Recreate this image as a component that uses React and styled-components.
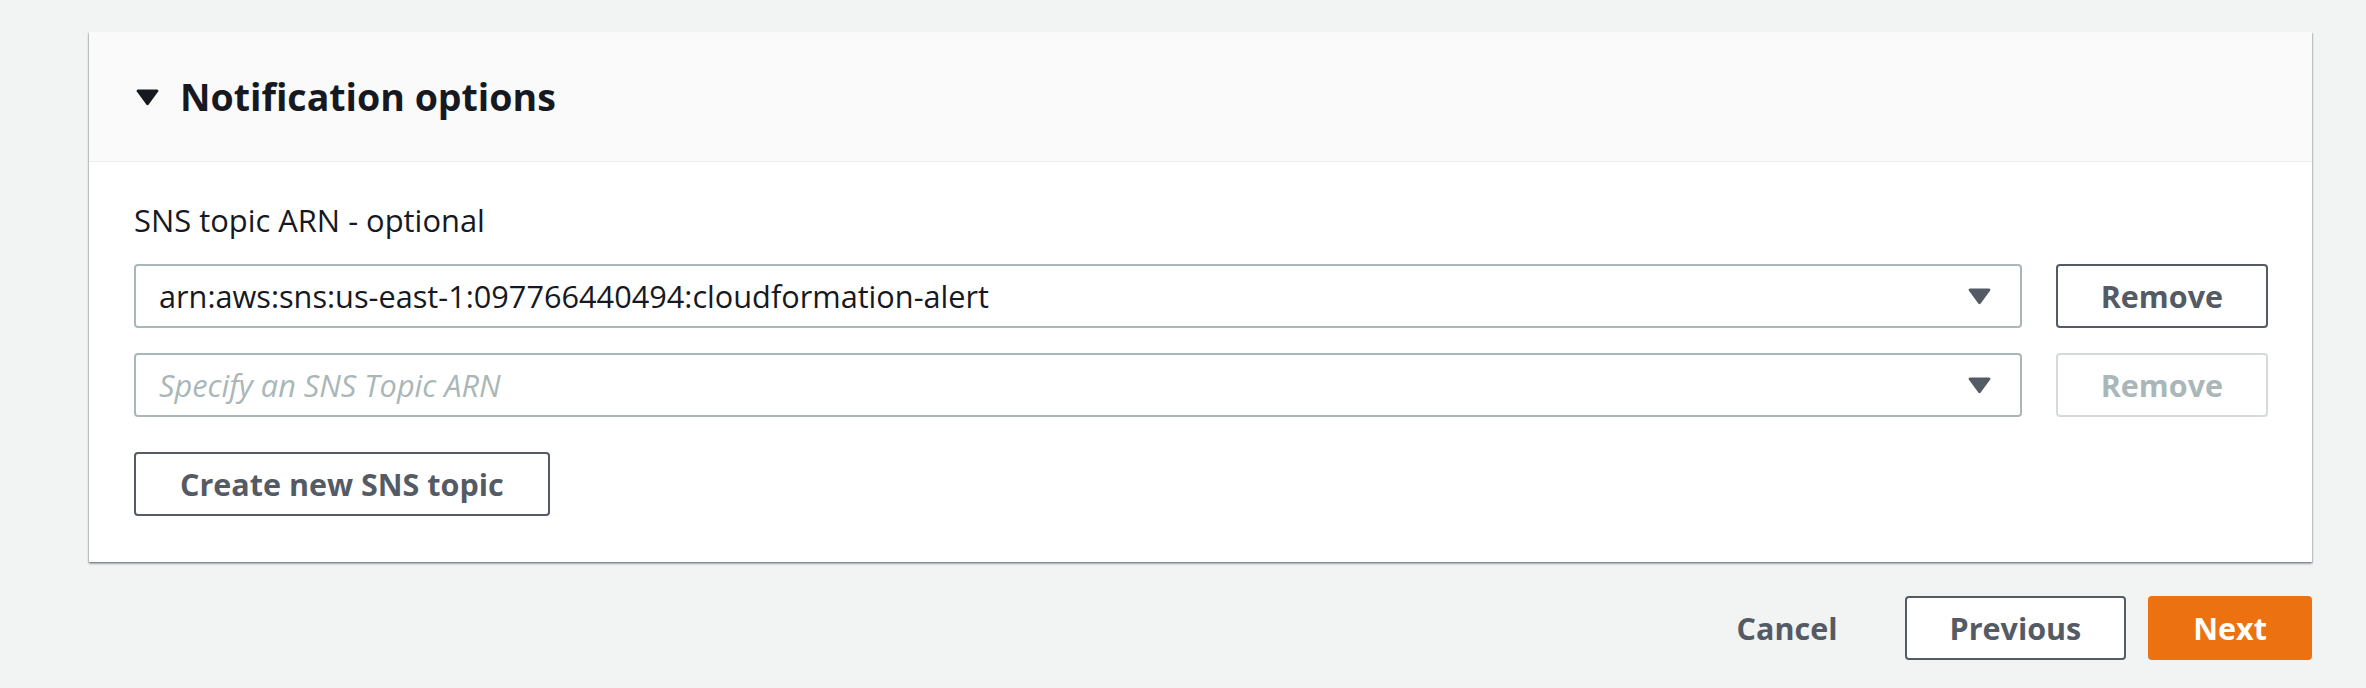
import styled, { createGlobalStyle } from 'styled-components';

const GlobalStyle = createGlobalStyle`
  html, body {
    margin: 0;
    padding: 0;
    background: #f2f3f3;
  }
  body {
    font-family: "Open Sans", "Noto Sans", sans-serif;
    color: #16191f;
    min-height: 100vh;
  }
`;

const Page = styled.div`
  padding: 32px 54px 0 89px;
`;

const Panel = styled.section`
  background: #fff;
  box-shadow: 0 2px 2px 0 rgba(0, 28, 36, 0.3), 1px 1px 1px 0 rgba(0, 28, 36, 0.15),
    -1px 1px 1px 0 rgba(0, 28, 36, 0.15);
`;

const PanelHeader = styled.header`
  display: flex;
  align-items: center;
  gap: 21px;
  height: 129px;
  padding-left: 47px;
  background: #fafafa;
  border-bottom: 1px solid #eaeded;
`;

const Title = styled.h2`
  margin: 0;
  font-size: 37.5px;
  font-weight: 700;
  line-height: 48px;
  color: #16191f;
`;

const PanelBody = styled.div`
  padding: 38px 44px 46px 45px;
`;

const Label = styled.label`
  display: block;
  font-size: 30.9px;
  line-height: 40px;
  margin-bottom: 24px;
  color: #16191f;
`;

const Rows = styled.div`
  display: flex;
  flex-direction: column;
  gap: 25px;
`;

const Row = styled.div`
  display: flex;
  align-items: center;
  gap: 34px;
`;

const Select = styled.div`
  flex: 1;
  display: flex;
  align-items: center;
  justify-content: space-between;
  height: 64px;
  box-sizing: border-box;
  padding: 0 29px 0 23px;
  background: #fff;
  border: 2px solid #aab7b8;
  border-radius: 4px;
  font-size: 30.7px;
  line-height: 40px;
  color: ${p => (p.$placeholder ? '#aab7b8' : '#16191f')};
  font-style: ${p => (p.$placeholder ? 'italic' : 'normal')};
`;

const Button = styled.button`
  height: 64px;
  box-sizing: border-box;
  padding: 0 ${p => p.$pad || 43}px;
  border-radius: 4px;
  font-family: inherit;
  font-size: 30.5px;
  font-weight: 700;
  line-height: 40px;
  cursor: pointer;
  white-space: nowrap;
  border: 2px solid ${p => (p.$variant === 'primary' ? '#ec7211' : p.$variant === 'link' ? 'transparent' : '#545b64')};
  background: ${p => (p.$variant === 'primary' ? '#ec7211' : p.$variant === 'link' ? 'transparent' : '#fff')};
  color: ${p => (p.$variant === 'primary' ? '#fff' : '#545b64')};

  &:disabled {
    border-color: #d5dbdb;
    color: #aab7b8;
    cursor: default;
  }
`;

const CreateRow = styled.div`
  margin-top: 35px;
`;

const Footer = styled.div`
  display: flex;
  justify-content: flex-end;
  align-items: center;
  gap: 22px;
  margin-top: 34px;
`;

function Caret({ color = '#545b64' }) {
  return (
    <svg width="23" height="18" viewBox="0 0 23 18" aria-hidden="true">
      <path d="M2 1.5h19c1.2 0 1.8 1.2 1.2 2.1L12.7 16.6c-.6.8-1.8.8-2.4 0L.8 3.6C.2 2.7.8 1.5 2 1.5z" fill={color} />
    </svg>
  );
}

export default function App() {
  const topics = [
    { value: 'arn:aws:sns:us-east-1:097766440494:cloudformation-alert', removable: true },
    { value: '', removable: false }
  ];

  return (
    <>
      <GlobalStyle />
      <Page>
        <Panel>
          <PanelHeader>
            <Caret color="#16191f" />
            <Title>Notification options</Title>
          </PanelHeader>
          <PanelBody>
            <Label>SNS topic ARN - optional</Label>
            <Rows>
              {topics.map((t, idx) => (
                <Row key={idx}>
                  <Select $placeholder={!t.value}>
                    <span>{t.value || 'Specify an SNS Topic ARN'}</span>
                    <Caret />
                  </Select>
                  <Button type="button" disabled={!t.removable}>Remove</Button>
                </Row>
              ))}
            </Rows>
            <CreateRow>
              <Button type="button" $pad={44}>Create new SNS topic</Button>
            </CreateRow>
          </PanelBody>
        </Panel>
        <Footer>
          <Button type="button" $variant="link">Cancel</Button>
          <Button type="button">Previous</Button>
          <Button type="button" $variant="primary">Next</Button>
        </Footer>
      </Page>
    </>
  );
}
